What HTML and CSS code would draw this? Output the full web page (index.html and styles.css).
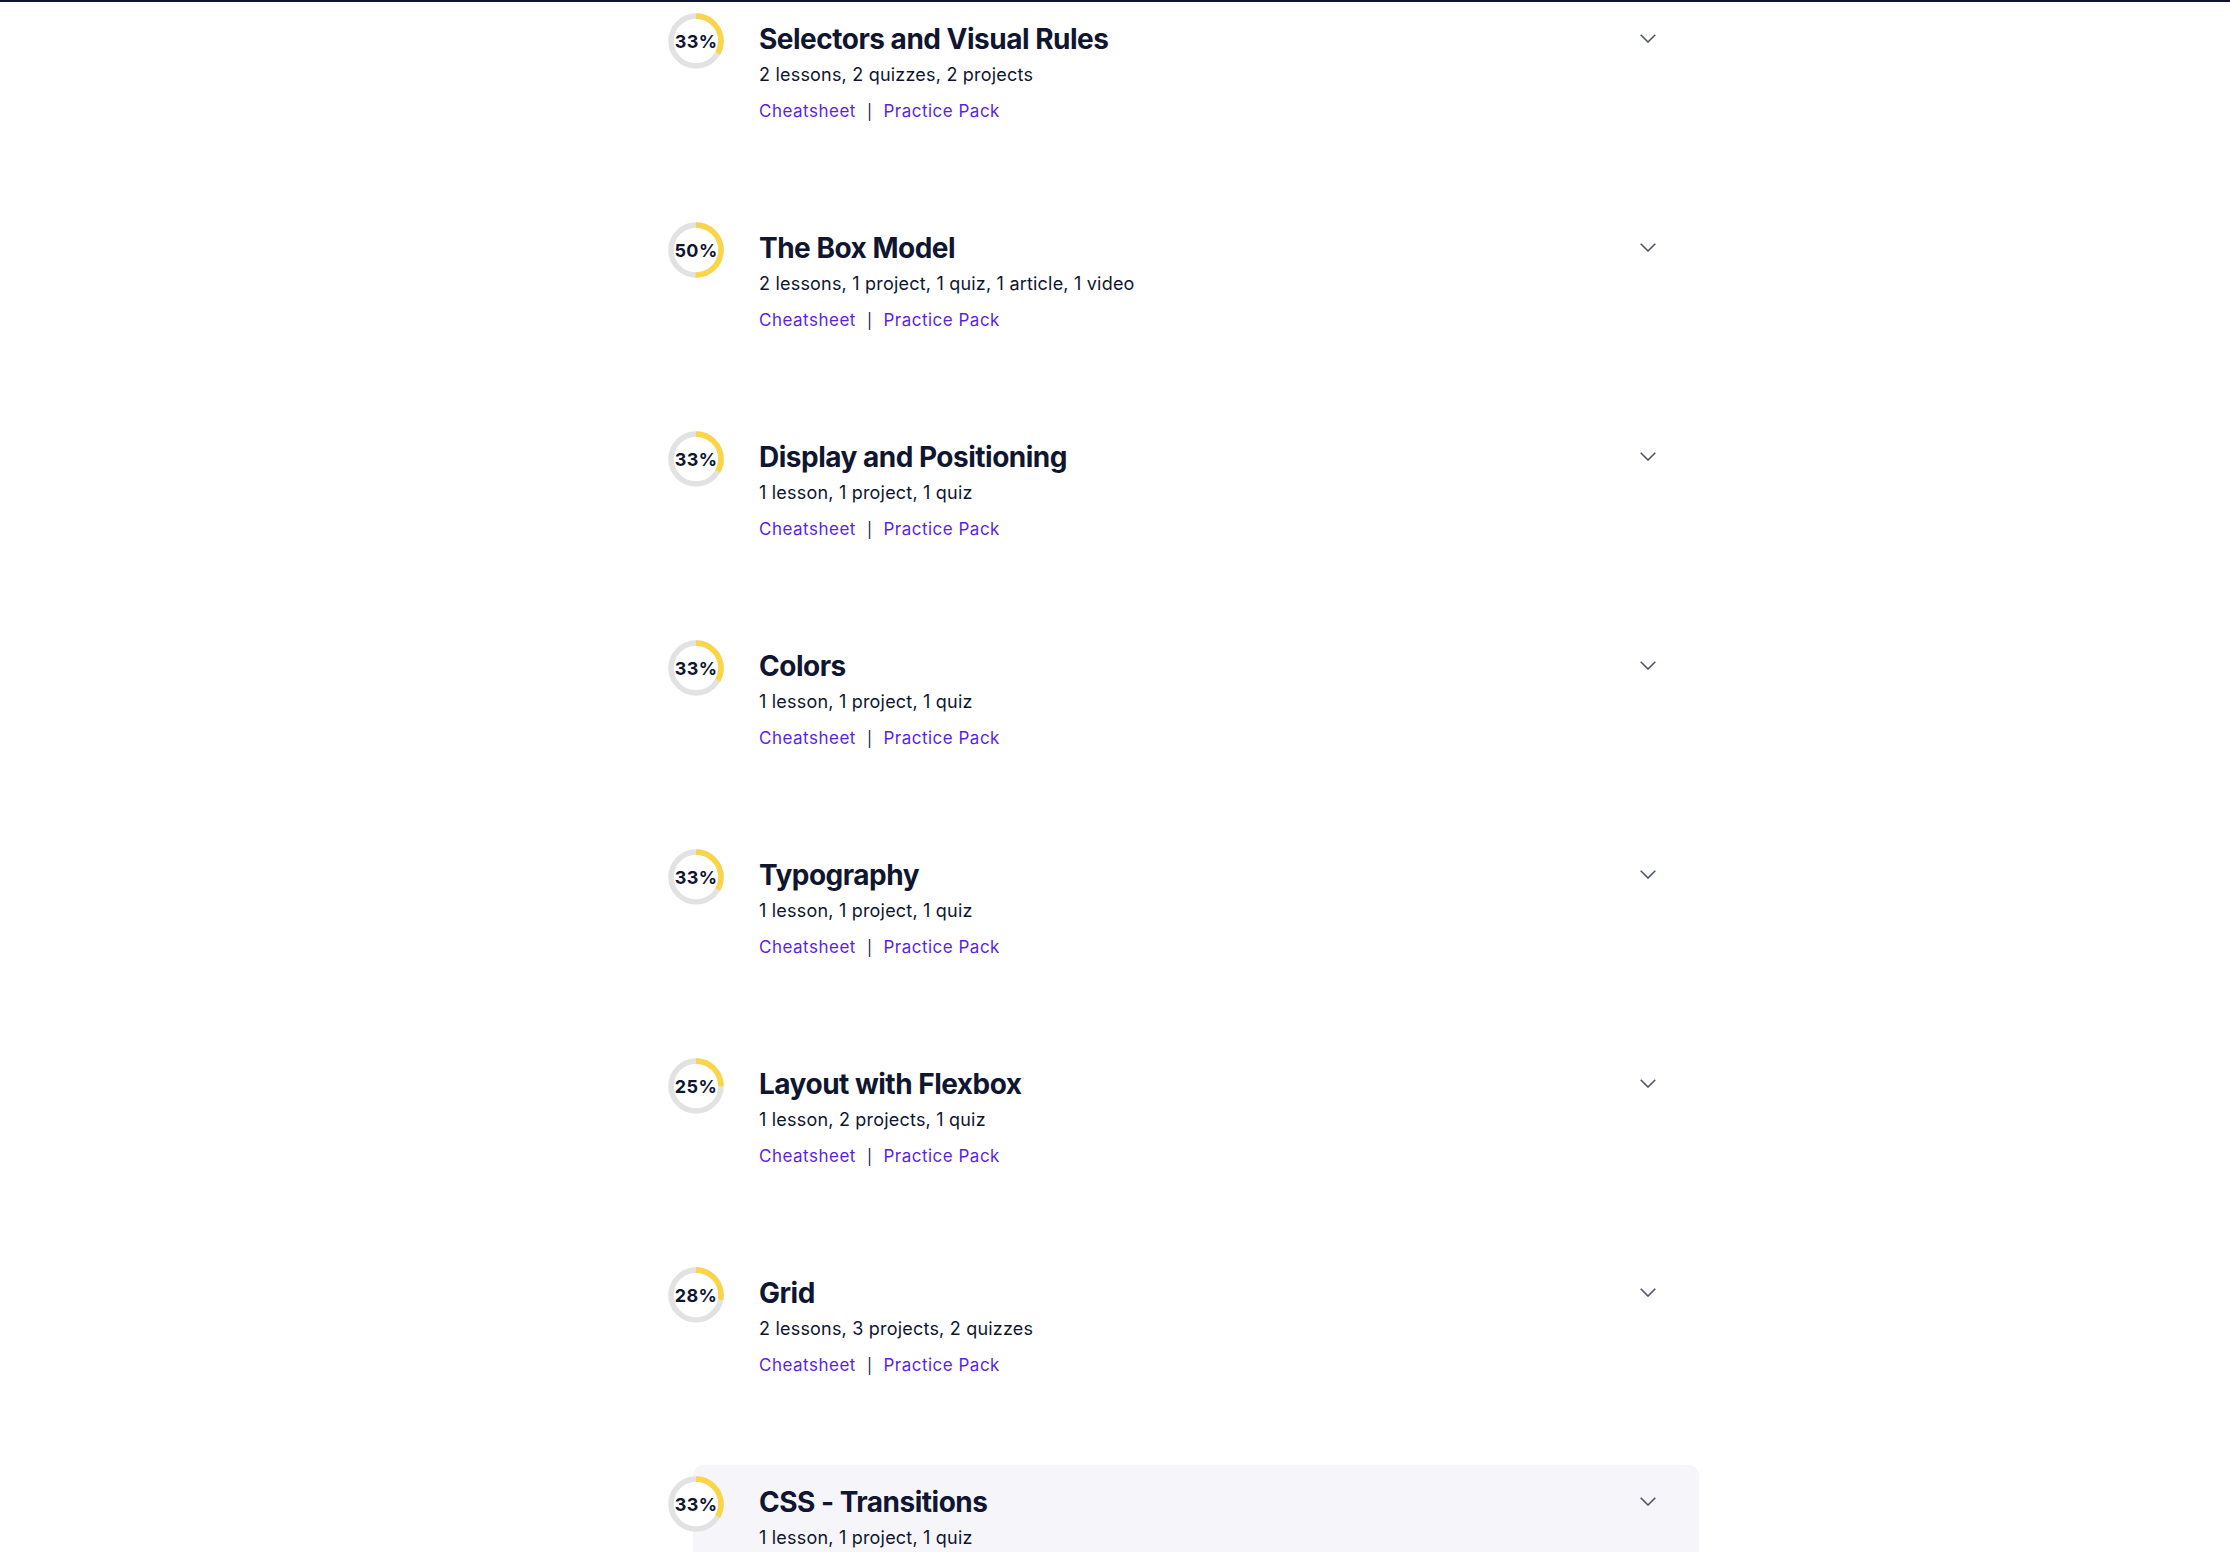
FILE: index.html
```html
<!DOCTYPE html>
<html lang="en">
<head>
<meta charset="utf-8">
<title>Syllabus</title>
<link rel="stylesheet" href="styles.css">
</head>
<body>
<div class="page">
  <ul class="modules">
    <li class="module">
      <div class="ring">
        <svg viewBox="0 0 56 56" width="56" height="56"><circle class="ring-bg" cx="28" cy="28" r="25"/><circle class="ring-fg" cx="28" cy="28" r="25" stroke-dasharray="51.84 157.08"/></svg>
        <span class="ring-label">33%</span>
      </div>
      <div class="info">
        <h3 class="title">Selectors and Visual Rules</h3>
        <p class="meta">2 lessons, 2 quizzes, 2 projects</p>
        <p class="links"><a href="#">Cheatsheet</a><span class="sep">|</span><a href="#">Practice Pack</a></p>
      </div>
      <svg class="chev" viewBox="0 0 16 9" width="16" height="9"><path d="M0.7 0.7 L8 8 L15.3 0.7"/></svg>
    </li>
    <li class="module">
      <div class="ring">
        <svg viewBox="0 0 56 56" width="56" height="56"><circle class="ring-bg" cx="28" cy="28" r="25"/><circle class="ring-fg" cx="28" cy="28" r="25" stroke-dasharray="78.54 157.08"/></svg>
        <span class="ring-label">50%</span>
      </div>
      <div class="info">
        <h3 class="title">The Box Model</h3>
        <p class="meta">2 lessons, 1 project, 1 quiz, 1 article, 1 video</p>
        <p class="links"><a href="#">Cheatsheet</a><span class="sep">|</span><a href="#">Practice Pack</a></p>
      </div>
      <svg class="chev" viewBox="0 0 16 9" width="16" height="9"><path d="M0.7 0.7 L8 8 L15.3 0.7"/></svg>
    </li>
    <li class="module">
      <div class="ring">
        <svg viewBox="0 0 56 56" width="56" height="56"><circle class="ring-bg" cx="28" cy="28" r="25"/><circle class="ring-fg" cx="28" cy="28" r="25" stroke-dasharray="51.84 157.08"/></svg>
        <span class="ring-label">33%</span>
      </div>
      <div class="info">
        <h3 class="title">Display and Positioning</h3>
        <p class="meta">1 lesson, 1 project, 1 quiz</p>
        <p class="links"><a href="#">Cheatsheet</a><span class="sep">|</span><a href="#">Practice Pack</a></p>
      </div>
      <svg class="chev" viewBox="0 0 16 9" width="16" height="9"><path d="M0.7 0.7 L8 8 L15.3 0.7"/></svg>
    </li>
    <li class="module">
      <div class="ring">
        <svg viewBox="0 0 56 56" width="56" height="56"><circle class="ring-bg" cx="28" cy="28" r="25"/><circle class="ring-fg" cx="28" cy="28" r="25" stroke-dasharray="51.84 157.08"/></svg>
        <span class="ring-label">33%</span>
      </div>
      <div class="info">
        <h3 class="title">Colors</h3>
        <p class="meta">1 lesson, 1 project, 1 quiz</p>
        <p class="links"><a href="#">Cheatsheet</a><span class="sep">|</span><a href="#">Practice Pack</a></p>
      </div>
      <svg class="chev" viewBox="0 0 16 9" width="16" height="9"><path d="M0.7 0.7 L8 8 L15.3 0.7"/></svg>
    </li>
    <li class="module">
      <div class="ring">
        <svg viewBox="0 0 56 56" width="56" height="56"><circle class="ring-bg" cx="28" cy="28" r="25"/><circle class="ring-fg" cx="28" cy="28" r="25" stroke-dasharray="51.84 157.08"/></svg>
        <span class="ring-label">33%</span>
      </div>
      <div class="info">
        <h3 class="title">Typography</h3>
        <p class="meta">1 lesson, 1 project, 1 quiz</p>
        <p class="links"><a href="#">Cheatsheet</a><span class="sep">|</span><a href="#">Practice Pack</a></p>
      </div>
      <svg class="chev" viewBox="0 0 16 9" width="16" height="9"><path d="M0.7 0.7 L8 8 L15.3 0.7"/></svg>
    </li>
    <li class="module">
      <div class="ring">
        <svg viewBox="0 0 56 56" width="56" height="56"><circle class="ring-bg" cx="28" cy="28" r="25"/><circle class="ring-fg" cx="28" cy="28" r="25" stroke-dasharray="39.27 157.08"/></svg>
        <span class="ring-label">25%</span>
      </div>
      <div class="info">
        <h3 class="title">Layout with Flexbox</h3>
        <p class="meta">1 lesson, 2 projects, 1 quiz</p>
        <p class="links"><a href="#">Cheatsheet</a><span class="sep">|</span><a href="#">Practice Pack</a></p>
      </div>
      <svg class="chev" viewBox="0 0 16 9" width="16" height="9"><path d="M0.7 0.7 L8 8 L15.3 0.7"/></svg>
    </li>
    <li class="module">
      <div class="ring">
        <svg viewBox="0 0 56 56" width="56" height="56"><circle class="ring-bg" cx="28" cy="28" r="25"/><circle class="ring-fg" cx="28" cy="28" r="25" stroke-dasharray="43.98 157.08"/></svg>
        <span class="ring-label">28%</span>
      </div>
      <div class="info">
        <h3 class="title">Grid</h3>
        <p class="meta">2 lessons, 3 projects, 2 quizzes</p>
        <p class="links"><a href="#">Cheatsheet</a><span class="sep">|</span><a href="#">Practice Pack</a></p>
      </div>
      <svg class="chev" viewBox="0 0 16 9" width="16" height="9"><path d="M0.7 0.7 L8 8 L15.3 0.7"/></svg>
    </li>
    <li class="module module-hover">
      <div class="ring">
        <svg viewBox="0 0 56 56" width="56" height="56"><circle class="ring-bg" cx="28" cy="28" r="25"/><circle class="ring-fg" cx="28" cy="28" r="25" stroke-dasharray="51.84 157.08"/></svg>
        <span class="ring-label">33%</span>
      </div>
      <div class="info">
        <h3 class="title">CSS - Transitions</h3>
        <p class="meta">1 lesson, 1 project, 1 quiz</p>
      </div>
      <svg class="chev" viewBox="0 0 16 9" width="16" height="9"><path d="M0.7 0.7 L8 8 L15.3 0.7"/></svg>
    </li>
  </ul>
</div>
</body>
</html>
```
FILE: styles.css
```css
html, body {
  margin: 0;
  padding: 0;
  background: #ffffff;
}
body {
  font-family: Inter, "Noto Sans", "Liberation Sans", sans-serif;
  color: #10162f;
  border-top: 2px solid #10162f;
  height: 1550px;
  overflow: hidden;
}
.page {
  padding-left: 693px;
}
.modules {
  list-style: none;
  margin: 0;
  padding: 0;
  width: 1006px;
}
.module {
  display: flex;
  align-items: flex-start;
  height: 209px;
  box-sizing: border-box;
  padding: 11px 43px 0 0;
  border-radius: 10px;
}
.module-hover {
  background: #f5f5fa;
}
.ring {
  position: relative;
  flex: none;
  width: 56px;
  height: 56px;
  margin-left: -25px;
  border-radius: 50%;
  background: #ffffff;
}
.ring svg {
  display: block;
  transform: rotate(-90deg);
}
.ring-bg {
  fill: none;
  stroke: #e2e2e2;
  stroke-width: 5.5;
}
.ring-fg {
  fill: none;
  stroke: #fad548;
  stroke-width: 5.5;
}
.ring-label {
  position: absolute;
  inset: 0;
  display: flex;
  align-items: center;
  justify-content: center;
  font-size: 18px;
  font-weight: 700;
  letter-spacing: 0.4px;
  color: #10162f;
}
.info {
  flex: 1;
  margin-left: 35px;
  padding-top: 8px;
}
.title {
  margin: 0;
  font-size: 28px;
  line-height: 36px;
  font-weight: 700;
  letter-spacing: -0.5px;
  color: #10162f;
}
.meta {
  margin: 6px 0 0;
  font-size: 18px;
  line-height: 24px;
  letter-spacing: 0.2px;
  color: #10162f;
}
.links {
  margin: 12px 0 0;
  font-size: 17px;
  line-height: 24px;
  letter-spacing: 0.5px;
}
.links a {
  color: #5b1fe6;
  text-decoration: none;
}
.sep {
  margin: 0 11px;
  font-size: 15px;
  color: #10162f;
}
.chev {
  flex: none;
  margin-top: 21px;
  fill: none;
  stroke: #4f5468;
  stroke-width: 1.6;
}
```
